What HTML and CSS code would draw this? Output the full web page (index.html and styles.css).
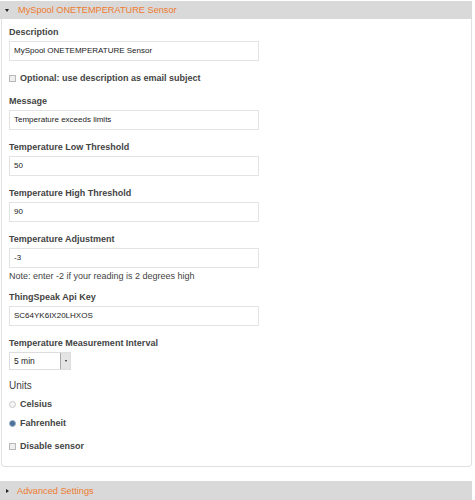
FILE: index.html
```html
<!DOCTYPE html>
<html>
<head>
<meta charset="utf-8">
<link rel="stylesheet" href="styles.css">
</head>
<body>
<div class="panel-head"><span class="tri-down"></span><span class="head-title">MySpool ONETEMPERATURE Sensor</span></div>
<div class="panel-body">
  <div class="label l-first">Description</div>
  <div class="input">MySpool ONETEMPERATURE Sensor</div>
  <div class="check-row opt"><span class="cbox"></span><span class="check-label">Optional: use description as email subject</span></div>
  <div class="label">Message</div>
  <div class="input">Temperature exceeds limits</div>
  <div class="label">Temperature Low Threshold</div>
  <div class="input">50</div>
  <div class="label">Temperature High Threshold</div>
  <div class="input">90</div>
  <div class="label">Temperature Adjustment</div>
  <div class="input">-3</div>
  <div class="note">Note: enter -2 if your reading is 2 degrees high</div>
  <div class="label l-after-note">ThingSpeak Api Key</div>
  <div class="input">SC64YK6IX20LHXOS</div>
  <div class="label">Temperature Measurement Interval</div>
  <div class="select"><span class="sel-text">5 min</span><span class="sel-btn"><span class="sel-tri"></span></span></div>
  <div class="label l-units">Units</div>
  <div class="check-row r1"><span class="radio"></span><span class="check-label">Celsius</span></div>
  <div class="check-row r2"><span class="radio on"></span><span class="check-label">Fahrenheit</span></div>
  <div class="check-row r3"><span class="cbox"></span><span class="check-label">Disable sensor</span></div>
</div>
<div class="panel-head adv"><span class="tri-right"></span><span class="head-title">Advanced Settings</span></div>
</body>
</html>
```
FILE: styles.css
```css
html, body {
  margin: 0;
  padding: 0;
  background: #fff;
}
body {
  font-family: "Liberation Sans", Arial, sans-serif;
  color: #333;
  width: 473px;
}
.panel-head {
  margin-top: 1px;
  height: 18px;
  width: 472px;
  background: #d9d9d9;
  display: flex;
  align-items: center;
}
.head-title {
  color: #ee7b2f;
  font-size: 9.2px;
  margin-left: 9px;
}
.tri-down {
  margin-left: 5px;
  width: 0;
  height: 0;
  border-left: 2.5px solid transparent;
  border-right: 2.5px solid transparent;
  border-top: 3px solid #222;
}
.tri-right {
  margin-left: 6px;
  width: 0;
  height: 0;
  border-top: 2.5px solid transparent;
  border-bottom: 2.5px solid transparent;
  border-left: 3px solid #222;
}
.adv {
  margin-top: 14px;
  height: 19px;
}
.adv .head-title {
  margin-left: 8px;
}
.panel-body {
  margin-left: 1px;
  width: 471px;
  height: 448px;
  border: 1px solid #e0e0e0;
  border-top: none;
  border-radius: 0 0 4px 4px;
  padding-left: 7px;
  box-sizing: border-box;
  display: flex;
  flex-direction: column;
  align-items: flex-start;
}
.label {
  font-size: 9px;
  font-weight: bold;
  color: #444;
  margin-top: 11px;
  line-height: 12px;
  height: 12px;
}
.l-first {
  margin-top: 7px;
}
.input {
  margin-top: 3px;
  width: 250px;
  height: 20px;
  box-sizing: border-box;
  border: 1px solid #e3e3e3;
  font-size: 8px;
  line-height: 18px;
  padding-left: 4px;
  color: #222;
}
.check-row {
  display: flex;
  align-items: center;
  height: 12px;
}
.opt {
  margin-top: 11px;
}
.check-label {
  font-size: 9px;
  font-weight: bold;
  color: #444;
  margin-left: 4px;
}
.cbox {
  width: 5px;
  height: 5px;
  border: 1px solid #b8b8b8;
  background: #eee;
  margin-left: 0;
}
.radio {
  width: 5px;
  height: 5px;
  border: 1px solid #c8c8c8;
  border-radius: 50%;
  background: #f4f4f4;
  margin-left: 0;
}
.radio.on {
  background: #4a6f9a;
  border-color: #9bb0c8;
}
.note {
  font-size: 9px;
  color: #444;
  margin-top: 3px;
  line-height: 11px;
}
.l-after-note {
  margin-top: 9px;
}
.select {
  margin-top: 3px;
  width: 62px;
  height: 18px;
  box-sizing: border-box;
  border: 1px solid #ddd;
  display: flex;
  align-items: stretch;
}
.sel-text {
  flex: 1;
  font-size: 8.5px;
  line-height: 16px;
  padding-left: 4px;
  color: #222;
}
.sel-btn {
  width: 9px;
  background: #e4e4e4;
  border-left: 1px solid #aaa;
  display: flex;
  align-items: center;
  justify-content: center;
}
.sel-tri {
  width: 0;
  height: 0;
  border-left: 1.5px solid transparent;
  border-right: 1.5px solid transparent;
  border-top: 2px solid #222;
}
.l-units {
  margin-top: 10px;
  font-weight: normal;
  font-size: 10px;
}
.r1 {
  margin-top: 6px;
}
.r2 {
  margin-top: 7px;
}
.r3 {
  margin-top: 11px;
}
```
